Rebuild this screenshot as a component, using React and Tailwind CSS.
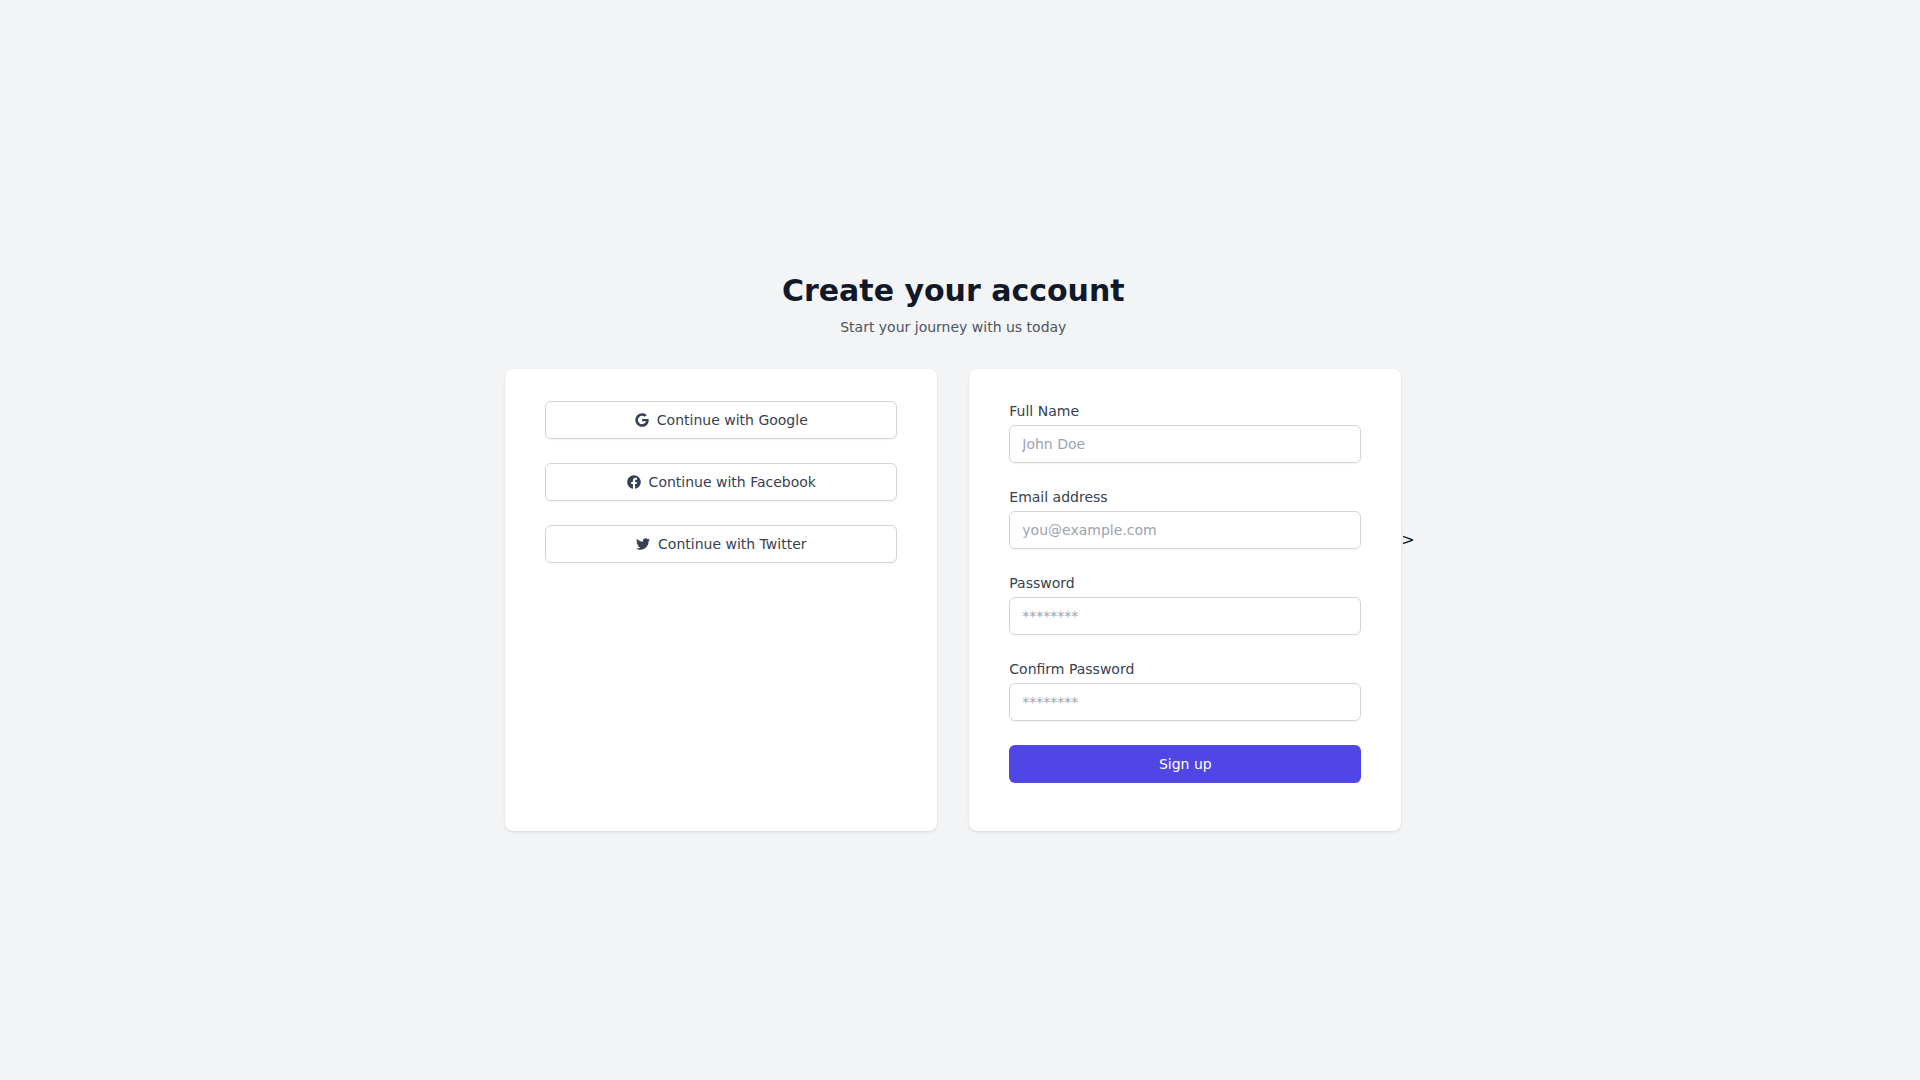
import React, { useState } from 'react';
import { FaGoogle, FaFacebook, FaTwitter } from 'react-icons/fa';

const providers = [
  { name: 'Google', icon: FaGoogle },
  { name: 'Facebook', icon: FaFacebook },
  { name: 'Twitter', icon: FaTwitter },
];

const fields = [
  { id: 'name', label: 'Full Name', type: 'text', placeholder: 'John Doe', autoComplete: 'name' },
  { id: 'email', label: 'Email address', type: 'email', placeholder: 'you@example.com', autoComplete: 'email' },
  { id: 'password', label: 'Password', type: 'password', placeholder: '********', autoComplete: 'new-password' },
  { id: 'confirmPassword', label: 'Confirm Password', type: 'password', placeholder: '********', autoComplete: 'new-password' },
];

const SignUp = () => {
  const [values, setValues] = useState({ name: '', email: '', password: '', confirmPassword: '' });

  const handleChange = (e) => {
    setValues({ ...values, [e.target.name]: e.target.value });
  };

  return (
    <div className="w-full max-w-4xl">
      {/* Header */}
      <div className="pt-6 text-center">
        <h2 className="text-3xl font-extrabold text-[#111827]">Create your account</h2>
        <p className="mt-2 text-sm text-[#4b5563]">Start your journey with us today</p>
      </div>

      <div className="mt-8 grid grid-cols-1 gap-8 md:grid-cols-2">
        {/* Social logins */}
        <div className="space-y-6 rounded-lg bg-white px-10 pt-8 pb-12 shadow-sm">
          {providers.map(({ name, icon: Icon }) => (
            <button
              key={name}
              type="button"
              className="flex w-full items-center justify-center rounded-md border border-[#d1d5db] bg-white px-4 py-2 text-sm font-medium text-[#374151] shadow-xs hover:bg-gray-50"
            >
              <Icon className="mr-2" />
              Continue with {name}
            </button>
          ))}
        </div>

        {/* Email form */}
        <div className="rounded-lg bg-white px-10 pt-8 pb-12 shadow-sm">
          <form className="space-y-6" onSubmit={(e) => e.preventDefault()}>
            {fields.map((field) => (
              <div key={field.id}>
                <label htmlFor={field.id} className="block text-sm font-medium text-[#374151]">
                  {field.label}
                </label>
                <input
                  id={field.id}
                  name={field.id}
                  type={field.type}
                  autoComplete={field.autoComplete}
                  placeholder={field.placeholder}
                  value={values[field.id]}
                  onChange={handleChange}
                  className="mt-1 block w-full rounded-md border border-[#d1d5db] px-3 py-2 text-sm placeholder-[#9ca3af] shadow-xs focus:border-indigo-500 focus:outline-none"
                />
              </div>
            ))}
            <button
              type="submit"
              className="flex w-full justify-center rounded-md border border-transparent bg-[#4f46e5] px-4 py-2 text-sm font-medium text-white hover:bg-[#4338ca]"
            >
              Sign up
            </button>
          </form>
        </div>
      </div>
    </div>
  );
};

const App = () => (
  <div className="flex min-h-screen items-center justify-center bg-[#f3f4f6] font-['DejaVu_Sans',sans-serif] text-[#111827]">
    <SignUp />
    <span>&gt;</span>
  </div>
);

export default App;
